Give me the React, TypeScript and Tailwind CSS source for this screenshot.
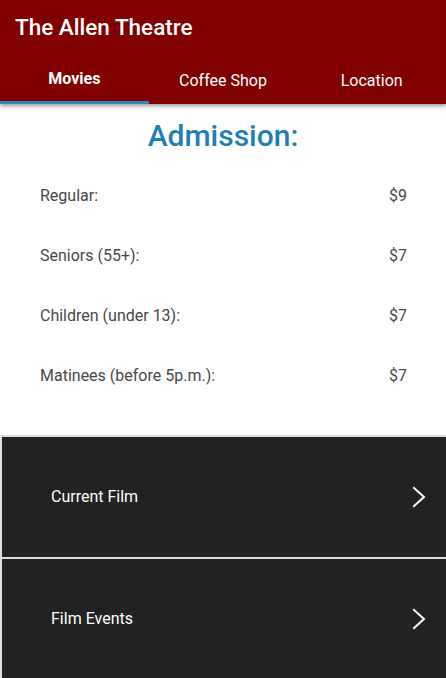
import React from 'react';

const prices = [
  { label: 'Regular:', price: '$9' },
  { label: 'Seniors (55+):', price: '$7' },
  { label: 'Children (under 13):', price: '$7' },
  { label: 'Matinees (before 5p.m.):', price: '$7' },
];

const Chevron = () => (
  <svg width="16" height="22" viewBox="0 0 16 22" fill="none">
    <path d="M4 2l10 9-10 9" stroke="#fff" strokeWidth="2" strokeLinecap="square" />
  </svg>
);

const App: React.FC = () => {
  return (
    <div className="min-h-screen bg-white font-['Roboto',sans-serif]">
      {/* Header */}
      <header className="relative z-10 bg-[#800000] text-white shadow-[0_2px_4px_rgba(0,0,0,0.4)]">
        <div className="flex h-[56px] items-center px-[15px]">
          <h1 className="text-[22.5px] font-medium">The Allen Theatre</h1>
        </div>
        <nav className="flex h-[48px]">
          <div className="flex flex-1 items-center justify-center border-b-[3px] border-[#2b86c5] text-[16px] font-bold">
            Movies
          </div>
          <div className="flex flex-1 items-center justify-center pt-[2px] text-[16px]">Coffee Shop</div>
          <div className="flex flex-1 items-center justify-center pt-[2px] text-[16px]">Location</div>
        </nav>
      </header>

      {/* Admission */}
      <section className="pt-[12px]">
        <h2 className="text-center text-[30px] leading-[40px] font-medium text-[#1f7fb3]">Admission:</h2>
        <div className="mt-[10px] flex flex-col pr-[39px] pl-[40px]">
          {prices.map((p) => (
            <div key={p.label} className="flex h-[60px] items-center justify-between text-[16px] text-[#484848]">
              <span>{p.label}</span>
              <span>{p.price}</span>
            </div>
          ))}
        </div>
      </section>

      {/* Links */}
      <div className="mt-[29px] flex flex-col">
        {['Current Film', 'Film Events'].map((t) => (
          <div
            key={t}
            className="flex h-[122px] items-center justify-between border-t-2 border-l-2 border-[#ddd] bg-[#222] pr-[20px] pl-[49px] text-[16px] text-white"
          >
            <span>{t}</span>
            <Chevron />
          </div>
        ))}
      </div>
    </div>
  );
};

export default App;
